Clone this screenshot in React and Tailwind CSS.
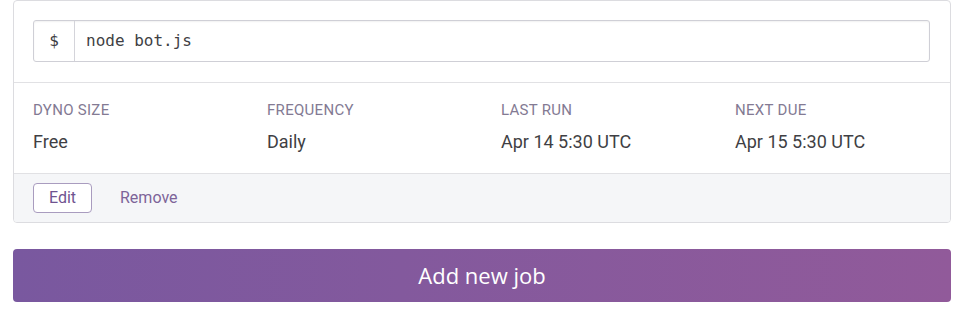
import React from "react";

const stats = [
  { label: "DYNO SIZE", value: "Free" },
  { label: "FREQUENCY", value: "Daily" },
  { label: "LAST RUN", value: "Apr 14 5:30 UTC" },
  { label: "NEXT DUE", value: "Apr 15 5:30 UTC" },
];

const App = () => {
  return (
    <div className="w-[966px] h-[321px] bg-white pl-[13px] pr-[15px] font-['Roboto',sans-serif]">
      <div className="border border-[#dcdce0] rounded-[4px] overflow-hidden">
        <div className="pt-[19px] pb-[20px] pl-[19px] pr-[20px] border-b border-[#e1e1e4]">
          <div className="flex h-[42px] border border-[#cfcfd6] rounded-[3px] shadow-[inset_0_1px_2px_rgba(0,0,0,0.06)]">
            <div className="w-[41px] flex items-center justify-center border-r border-[#d4d4da] font-['DejaVu_Sans_Mono',monospace] text-[16px] text-[#3f3f44]">
              $
            </div>
            <div className="flex items-center pl-[11px] font-['DejaVu_Sans_Mono',monospace] text-[16px] text-[#3f3f44]">
              node bot.js
            </div>
          </div>
        </div>

        <div className="flex pl-[19px] pt-[18px] h-[90px]">
          {stats.map((s, i) => (
            <div key={i} className="w-[234px] shrink-0">
              <div className="text-[15px] leading-[18px] tracking-[0.3px] text-[#837a93]">
                {s.label}
              </div>
              <div className="mt-[12px] text-[18px] leading-[22px] text-[#3f3f44]">
                {s.value}
              </div>
            </div>
          ))}
        </div>

        <div className="flex items-center h-[49px] pl-[19px] bg-[#f5f6f8] border-t border-[#e1e1e4]">
          <button className="h-[30px] w-[59px] rounded-[4px] border border-[#a99cbf] bg-white text-[16px] text-[#6f5390]">
            Edit
          </button>
          <button className="ml-[28px] text-[16px] text-[#7d6499]">Remove</button>
        </div>
      </div>

      <button className="mt-[26px] w-[938px] h-[53px] rounded-[4px] bg-gradient-to-r from-[#79589f] to-[#915a9a] text-white text-[22px] font-['Open_Sans',sans-serif]">
        Add new job
      </button>
    </div>
  );
};

export default App;
